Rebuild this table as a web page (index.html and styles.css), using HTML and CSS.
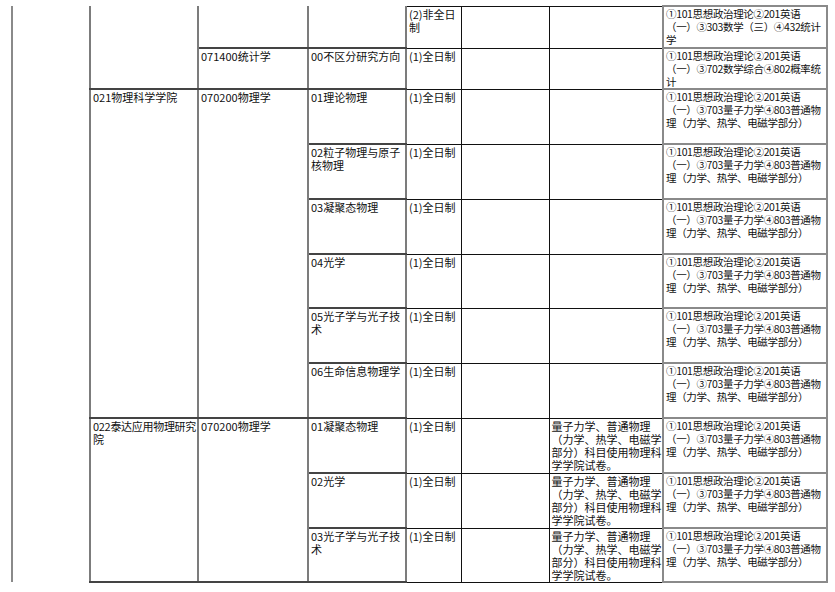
FILE: index.html
```html
<!DOCTYPE html>
<html lang="zh">
<head>
<meta charset="utf-8">
<link rel="stylesheet" href="styles.css">
</head>
<body>
<div class="page">
<table class="plan">
<colgroup>
<col class="c0"><col class="c1"><col class="c2"><col class="c3"><col class="c4"><col class="c5"><col class="c6"><col class="c7">
</colgroup>
<tr class="h42">
<td class="blank" rowspan="11"></td>
<td class="grp notop" rowspan="2"></td>
<td class="grp notop"></td>
<td class="grp notop"></td>
<td class="mid">(2)非全日<br>制</td>
<td class="mid"></td>
<td class="mid"></td>
<td class="exam">①101思想政治理论②201英语<br>（一）③303数学（三）④432统计<br>学</td>
</tr>
<tr class="h41">
<td class="grp">071400统计学</td>
<td class="grp">00不区分研究方向</td>
<td class="mid">(1)全日制</td>
<td class="mid"></td>
<td class="mid"></td>
<td class="exam">①101思想政治理论②201英语<br>（一）③702数学综合④802概率统<br>计</td>
</tr>
<tr class="h55">
<td class="grp" rowspan="6">021物理科学学院</td>
<td class="grp" rowspan="6">070200物理学</td>
<td class="grp">01理论物理</td>
<td class="mid">(1)全日制</td>
<td class="mid"></td>
<td class="mid"></td>
<td class="exam">①101思想政治理论②201英语<br>（一）③703量子力学④803普通物<br>理（力学、热学、电磁学部分）</td>
</tr>
<tr class="h55">
<td class="grp">02粒子物理与原子<br>核物理</td>
<td class="mid">(1)全日制</td>
<td class="mid"></td>
<td class="mid"></td>
<td class="exam">①101思想政治理论②201英语<br>（一）③703量子力学④803普通物<br>理（力学、热学、电磁学部分）</td>
</tr>
<tr class="h55">
<td class="grp">03凝聚态物理</td>
<td class="mid">(1)全日制</td>
<td class="mid"></td>
<td class="mid"></td>
<td class="exam">①101思想政治理论②201英语<br>（一）③703量子力学④803普通物<br>理（力学、热学、电磁学部分）</td>
</tr>
<tr class="h54">
<td class="grp">04光学</td>
<td class="mid">(1)全日制</td>
<td class="mid"></td>
<td class="mid"></td>
<td class="exam">①101思想政治理论②201英语<br>（一）③703量子力学④803普通物<br>理（力学、热学、电磁学部分）</td>
</tr>
<tr class="h55">
<td class="grp">05光子学与光子技<br>术</td>
<td class="mid">(1)全日制</td>
<td class="mid"></td>
<td class="mid"></td>
<td class="exam">①101思想政治理论②201英语<br>（一）③703量子力学④803普通物<br>理（力学、热学、电磁学部分）</td>
</tr>
<tr class="h55">
<td class="grp">06生命信息物理学</td>
<td class="mid">(1)全日制</td>
<td class="mid"></td>
<td class="mid"></td>
<td class="exam">①101思想政治理论②201英语<br>（一）③703量子力学④803普通物<br>理（力学、热学、电磁学部分）</td>
</tr>
<tr class="h55">
<td class="grp tight" rowspan="3">022泰达应用物理研究<br>院</td>
<td class="grp" rowspan="3">070200物理学</td>
<td class="grp">01凝聚态物理</td>
<td class="mid">(1)全日制</td>
<td class="mid"></td>
<td class="mid">量子力学、普通物理<br>（力学、热学、电磁学<br>部分）科目使用物理科<br>学学院试卷。</td>
<td class="exam">①101思想政治理论②201英语<br>（一）③703量子力学④803普通物<br>理（力学、热学、电磁学部分）</td>
</tr>
<tr class="h55">
<td class="grp">02光学</td>
<td class="mid">(1)全日制</td>
<td class="mid"></td>
<td class="mid">量子力学、普通物理<br>（力学、热学、电磁学<br>部分）科目使用物理科<br>学学院试卷。</td>
<td class="exam">①101思想政治理论②201英语<br>（一）③703量子力学④803普通物<br>理（力学、热学、电磁学部分）</td>
</tr>
<tr class="h54">
<td class="grp">03光子学与光子技<br>术</td>
<td class="mid">(1)全日制</td>
<td class="mid"></td>
<td class="mid">量子力学、普通物理<br>（力学、热学、电磁学<br>部分）科目使用物理科<br>学学院试卷。</td>
<td class="exam">①101思想政治理论②201英语<br>（一）③703量子力学④803普通物<br>理（力学、热学、电磁学部分）</td>
</tr>
</table>
</div>
</body>
</html>
```

FILE: styles.css
```css
html, body {
  margin: 0;
  padding: 0;
  background: #ffffff;
}

.page {
  padding: 5px 0 0 11px;
}

.plan {
  border-collapse: collapse;
  table-layout: fixed;
  width: 815px;
  font-family: "Noto Sans CJK SC", "Noto Sans", sans-serif;
  font-size: 11px;
  line-height: 13px;
  color: #111;
}

.c0 { width: 78px; }
.c1 { width: 108px; }
.c2 { width: 110px; }
.c3 { width: 98px; }
.c4 { width: 55px; }
.c5 { width: 88px; }
.c6 { width: 114px; }
.c7 { width: 164px; }

.h42 { height: 42px; }
.h41 { height: 41px; }
.h55 { height: 55px; }
.h54 { height: 54px; }

.plan td {
  vertical-align: top;
  padding: 1px 1px 0 2px;
  white-space: nowrap;
  overflow: hidden;
}

.blank {
  border-left: 2px solid #8a8a8a;
  border-top: none;
  border-bottom: none;
}

.grp {
  border-left: 2px solid #7c7c7c;
  border-right: 2px solid #7c7c7c;
  border-top: 2px solid #444;
  border-bottom: 2px solid #444;
}

.grp.notop {
  border-top: none;
}

.tight {
  letter-spacing: -0.3px;
}

.mid {
  border: 1px solid #111;
}

.plan td.exam {
  border: 2px solid #8a8a8a;
  padding-top: 0;
  font-size: 10.5px;
  letter-spacing: -0.35px;
}
```
